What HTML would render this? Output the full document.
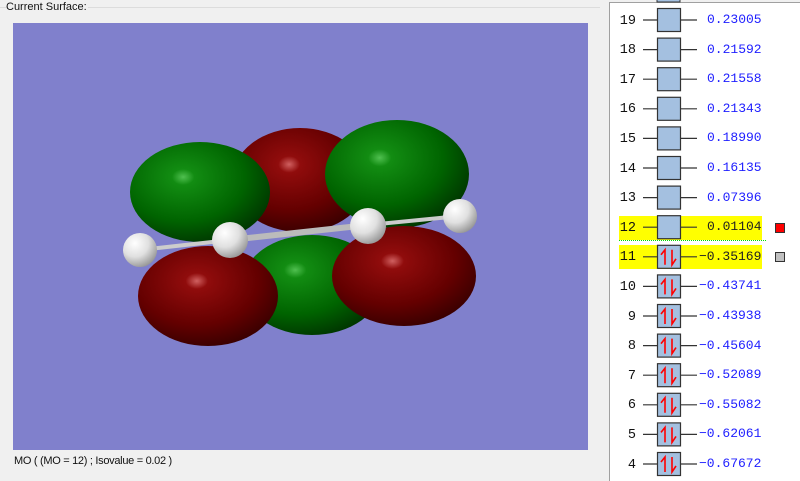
<!DOCTYPE html><html><head><style>
body{margin:0;width:800px;height:480px;background:#f0f0f0;position:relative;overflow:hidden;font-family:"Liberation Sans",sans-serif}
.a{position:absolute}
.num{position:absolute;width:30px;text-align:right;left:606px;font-family:"Liberation Mono",monospace;font-size:13.5px;line-height:16px;color:#111}
.val{position:absolute;font-family:"Liberation Mono",monospace;font-size:13px;line-height:16px;color:#2020ff}
</style></head><body>
<div class="a" style="left:0;top:7px;width:6px;border-top:1px solid #dcdcdc"></div>
<div class="a" style="left:88px;top:7px;width:512px;border-top:1px solid #dcdcdc"></div>
<div class="a" style="left:6px;top:1px;font-size:11px;color:#111">Current Surface:</div>
<div class="a" style="left:13px;top:23px;width:575px;height:427px;background:#8080cc"></div>
<div class="a" style="left:14px;top:455px;font-size:11px;color:#111;letter-spacing:-0.3px">MO ( (MO = 12) ; Isovalue = 0.02 )</div>
<svg class="a" style="left:0;top:0" width="600" height="460">
<defs>
<radialGradient id="g" cx="0.38" cy="0.35" r="0.8"><stop offset="0" stop-color="#50c050"/><stop offset="0.1" stop-color="#128c12"/><stop offset="0.55" stop-color="#006400"/><stop offset="0.85" stop-color="#003800"/><stop offset="1" stop-color="#001a00"/></radialGradient>
<radialGradient id="r" cx="0.42" cy="0.35" r="0.8"><stop offset="0" stop-color="#d06060"/><stop offset="0.1" stop-color="#900c0c"/><stop offset="0.55" stop-color="#640000"/><stop offset="0.85" stop-color="#380000"/><stop offset="1" stop-color="#1a0000"/></radialGradient>
<radialGradient id="w" cx="0.35" cy="0.3" r="0.8"><stop offset="0" stop-color="#fff"/><stop offset="0.5" stop-color="#e0e0e0"/><stop offset="1" stop-color="#8a8a8a"/></radialGradient>
</defs>
<ellipse cx="300" cy="180" rx="68" ry="52" fill="url(#r)"/>
<ellipse cx="312" cy="285" rx="70" ry="50" fill="url(#g)"/>
<ellipse cx="200" cy="192" rx="70" ry="50" fill="url(#g)"/>
<ellipse cx="397" cy="174" rx="72" ry="54" fill="url(#g)"/>
<ellipse cx="208" cy="296" rx="70" ry="50" fill="url(#r)"/>
<ellipse cx="404" cy="276" rx="72" ry="50" fill="url(#r)"/>
<line x1="140" y1="250" x2="230" y2="240" stroke="#ccc" stroke-width="4"/>
<line x1="230" y1="240" x2="368" y2="225" stroke="#bbb" stroke-width="6"/>
<line x1="368" y1="225" x2="460" y2="216" stroke="#ccc" stroke-width="4"/>
<circle cx="140" cy="250" r="17" fill="url(#w)"/>
<circle cx="230" cy="240" r="18" fill="url(#w)"/>
<circle cx="368" cy="226" r="18" fill="url(#w)"/>
<circle cx="460" cy="216" r="17" fill="url(#w)"/>
</svg>
<div class="a" style="left:609px;top:2px;width:191px;height:478px;background:#fff;border-left:1px solid #a0a0a0;border-top:1px solid #a0a0a0"></div>
<div class="a" style="left:619px;top:216px;width:143px;height:24px;background:#ffff00"></div>
<div class="a" style="left:619px;top:245px;width:143px;height:24px;background:#ffff00"></div>
<div class="a" style="left:619px;top:240px;width:147px;border-top:1px dotted #00dd00"></div>
<div class="a" style="left:775px;top:223px;width:8px;height:8px;background:#ff0000;border:1px solid #333"></div>
<div class="a" style="left:775px;top:252px;width:8px;height:8px;background:#c0c0c0;border:1px solid #333"></div>
<svg class="a" style="left:600px;top:0" width="200" height="480" id="lv">
<rect x="57" y="-10" width="23" height="12" fill="#a4c0e0" stroke="#333"/>
</svg>
<div id="rows"></div>
<script>
var d=[[19,"0.23005"],[18,"0.21592"],[17,"0.21558"],[16,"0.21343"],[15,"0.18990"],[14,"0.16135"],[13,"0.07396"],[12,"0.01104"],[11,"−0.35169"],[10,"−0.43741"],[9,"−0.43938"],[8,"−0.45604"],[7,"−0.52089"],[6,"−0.55082"],[5,"−0.62061"],[4,"−0.67672"]];
var s=document.getElementById('lv'),h='',r='';
d.forEach(function(e,i){var y=20+i*29.6;var occ=e[0]<=11;
h+='<line x1="43" y1="'+y+'" x2="97" y2="'+y+'" stroke="#333" stroke-width="1.2"/>';
h+='<rect x="57.5" y="'+(y-11.5)+'" width="23" height="23" fill="#a4c0e0" stroke="#333" stroke-width="1.2"/>';
if(occ){h+='<path d="M65 '+(y+8)+'V'+(y-7)+'L61 '+(y-2)+'M72 '+(y-7)+'V'+(y+8)+'L76 '+(y+2)+'" stroke="#ff0000" stroke-width="1.6" fill="none"/>';}
r+='<div class="num" style="top:'+(y-6.5)+'px">'+e[0]+'</div>';
r+='<div class="val" style="top:'+(y-8)+'px;left:'+(occ?699:707)+'px'+(e[0]==12||e[0]==11?';color:#222':'')+'">'+e[1]+'</div>';});
s.innerHTML+=h;document.getElementById('rows').innerHTML=r;
</script>
</body></html>
